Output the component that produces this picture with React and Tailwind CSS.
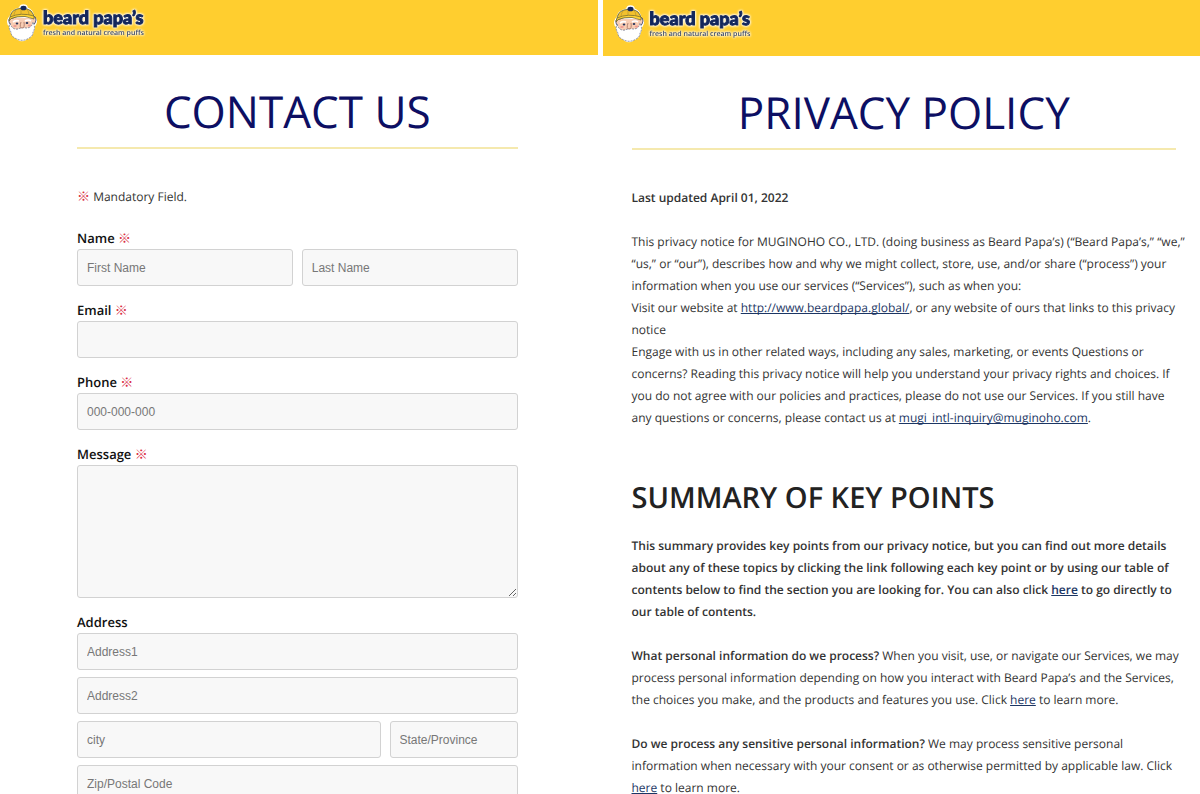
import React from "react";

const inputClass =
  "block h-[37px] w-full min-w-0 rounded-[3px] border border-[#d2d2d2] bg-[#f8f8f8] px-[9px] font-['Liberation_Sans',Arial,sans-serif] text-xs text-[#333] placeholder:text-[#777]";
const linkClass = "text-[#1c3664] underline [text-decoration-skip-ink:none]";

function Face() {
  return (
    <svg viewBox="0 0 32 38" className="h-[38px] w-8 shrink-0" aria-hidden="true">
      <path
        d="M14 4q0-3 3.500-3t3.500 3q6 2 7 10q3 1 2 5q-1 3-2 3q0 9-6 12q-6 5-12 0q-6-4-6-12q-3-2-2-6q1-3 2-3q1-7 10-9z"
        fill="#fff"
        stroke="#fff"
        strokeWidth="1.500"
      />
      <path d="M5 14q-3 0-2 4q1 4 4 4zM27 12q3 0 3 4q0 4-4 5z" fill="#f8cdb4" stroke="#33436b" strokeWidth=".8" />
      <path d="M5 14h22v11q-4 8-11 8t-11-8z" fill="#f8cdb4" />
      <path
        d="M4 19q2 7 8 6q4-2 8-1q6 0 7-6q3 6 0 10q0 4-4 6q-6 4-12 1q-6-2-6-7q-3-4-1-9z"
        fill="#fff"
        stroke="#6c7690"
        strokeWidth=".8"
        strokeDasharray="2 1"
      />
      <path d="M4 15q0-8 7-10q9-2 14 2q3 3 3 7q-4-2-7-2q-9-1-17 3z" fill="#f3c12d" stroke="#4f572f" strokeWidth=".8" />
      <path d="M3 17q1-3 7-4q9-2 18 2v-3q-13-4-24 1z" fill="#ffd333" stroke="#6b642b" strokeWidth=".7" />
      <path d="M10 6q-2 3-2 5M15 5v5M21 5q2 3 2 6" fill="none" stroke="#9b8434" strokeWidth=".5" />
      <ellipse cx="17.500" cy="4" rx="3" ry="2.300" fill="#14275c" />
      <path d="M7 18q3-2 6-1M19 17q3-2 6 0" stroke="#fff" strokeWidth="1.600" fill="none" />
      <ellipse cx="11" cy="19.500" rx="1.300" ry="1" fill="#25335c" />
      <ellipse cx="21" cy="19" rx="1.300" ry="1" fill="#25335c" />
      <path d="M15 18q-2 6 1 6t2-6" fill="#f8cdb4" stroke="#a3715f" strokeWidth=".8" />
      <ellipse cx="9" cy="22" rx="1.800" ry="1.100" fill="#ef9d93" />
      <ellipse cx="23.500" cy="21.500" rx="1.800" ry="1.100" fill="#ef9d93" />
    </svg>
  );
}

function Logo() {
  return (
    <a href="#home" aria-label="beard papa's" className="flex w-fit items-center gap-[5px]">
      <Face />
      <span className="flex flex-col gap-[3px] [filter:drop-shadow(0_0_1px_#fff)_drop-shadow(0_0_1px_#fff)]">
        <span className="h-[18px] font-['Lato',sans-serif] text-[18px] font-black leading-[18px] text-[#14275c] [-webkit-text-stroke:1px_#14275c]">
          beard papa’s
        </span>
        <span className="h-2.5 whitespace-nowrap text-[7px] font-semibold leading-[10px] text-[#3a4868]">
          fresh and natural cream puffs
        </span>
      </span>
    </a>
  );
}

function Title({ children }) {
  return (
    <h1 className="border-b-2 border-[#f5e9ae] pb-1.5 text-center text-[44px] leading-[60px] text-[#0d0f63]">
      {children}
    </h1>
  );
}

function Mark() {
  return (
    <span className="font-['Noto_Sans_CJK_JP',sans-serif] text-[13px] font-bold leading-none text-[#d92c43]">※</span>
  );
}

function Label({ htmlFor, required, children }) {
  return (
    <label htmlFor={htmlFor} className="block h-[22px] text-[13px] font-semibold leading-[22px] text-[#111]">
      {children} {required && <Mark />}
    </label>
  );
}

function ContactPage() {
  return (
    <section className="min-w-0 flex-1">
      <header className="h-[55px] bg-[#ffce2f] pl-1.5 pt-1">
        <Logo />
      </header>
      <main className="pl-[77px] pr-20 pt-[26px]">
        <Title>CONTACT US</Title>
        <form className="flex flex-col gap-[13px] pt-[37px]">
          <p className="mb-1.5 h-[22px] leading-[22px]">
            <Mark /> Mandatory Field.
          </p>
          <div>
            <Label htmlFor="first" required>Name</Label>
            <div className="grid grid-cols-2 gap-[9px]">
              <input id="first" className={inputClass} placeholder="First Name" />
              <input aria-label="Last Name" className={inputClass} placeholder="Last Name" />
            </div>
          </div>
          <div>
            <Label htmlFor="email" required>Email</Label>
            <input id="email" type="email" className={inputClass} />
          </div>
          <div>
            <Label htmlFor="phone" required>Phone</Label>
            <input id="phone" type="tel" className={inputClass} placeholder="000-000-000" />
          </div>
          <div>
            <Label htmlFor="message" required>Message</Label>
            <textarea
              id="message"
              className="block h-[133px] w-full resize-y rounded-[3px] border border-[#d2d2d2] bg-[#f8f8f8] p-[9px] text-xs"
            />
          </div>
          <div>
            <Label htmlFor="address1">Address</Label>
            <div className="flex flex-col gap-[7px]">
              <input id="address1" className={inputClass} placeholder="Address1" />
              <input aria-label="Address2" className={inputClass} placeholder="Address2" />
              <div className="grid grid-cols-[1fr_128px] gap-[9px]">
                <input aria-label="city" className={inputClass} placeholder="city" />
                <input aria-label="State/Province" className={inputClass} placeholder="State/Province" />
              </div>
              <input aria-label="Zip/Postal Code" className={inputClass} placeholder="Zip/Postal Code" />
            </div>
          </div>
        </form>
      </main>
    </section>
  );
}

function PrivacyPage() {
  return (
    <section className="min-w-0 flex-1">
      <header className="h-14 bg-[#ffce2f] pl-2.5 pt-[5px]">
        <Logo />
      </header>
      <main className="pl-[29px] pr-6 pt-[26px]">
        <Title>PRIVACY POLICY</Title>
        <div className="-mr-3 pt-[37px] leading-[22px]">
          <p className="mb-[22px] font-semibold">Last updated April 01, 2022</p>
          <p>
            This privacy notice for MUGINOHO CO., LTD. (doing business as Beard Papa’s) (“Beard Papa’s,” “we,” “us,”
            or “our”), describes how and why we might collect, store, use, and/or share (“process”) your information
            when you use our services (“Services”), such as when you:
          </p>
          <p>
            Visit our website at <a href="#website" className={linkClass}>http://www.beardpapa.global/</a>, or any
            website of ours that links to this privacy notice
          </p>
          <p>
            Engage with us in other related ways, including any sales, marketing, or events Questions or concerns?
            Reading this privacy notice will help you understand your privacy rights and choices. If you do not agree
            with our policies and practices, please do not use our Services. If you still have any&nbsp;questions or
            concerns, please contact us at{" "}
            <a href="#mail" className={linkClass}>mugi_intl-inquiry@muginoho.com</a>.
          </p>
          <h2 className="mb-4 mt-12 text-[29px] font-semibold leading-[42px] text-[#222]">SUMMARY OF KEY POINTS</h2>
          <p className="mb-[22px] font-semibold">
            This summary provides key points from our privacy notice, but you can find out more details about any of
            these topics by clicking the link following each key point or by using our table of contents below to
            find the section you are looking for. You can also click{" "}
            <a href="#contents" className={linkClass}>here</a> to go directly to our table of contents.
          </p>
          <p className="mb-[22px]">
            <strong className="font-semibold">What personal information do we process?</strong> When you visit, use,
            or navigate our Services, we may process personal information depending on how you interact with Beard
            Papa’s and the Services, the choices you make, and the products and features you use. Click{" "}
            <a href="#personal" className={linkClass}>here</a> to learn more.
          </p>
          <p>
            <strong className="font-semibold">Do we process any sensitive personal information?</strong> We may
            process sensitive personal information when necessary with your consent or as otherwise permitted by
            applicable law. Click <a href="#sensitive" className={linkClass}>here</a> to learn more.
          </p>
        </div>
      </main>
    </section>
  );
}

export default function App() {
  return (
    <div className="flex gap-[5px] bg-white font-['Open_Sans',sans-serif] text-xs text-[#333] [text-rendering:geometricPrecision]">
      <ContactPage />
      <PrivacyPage />
    </div>
  );
}
